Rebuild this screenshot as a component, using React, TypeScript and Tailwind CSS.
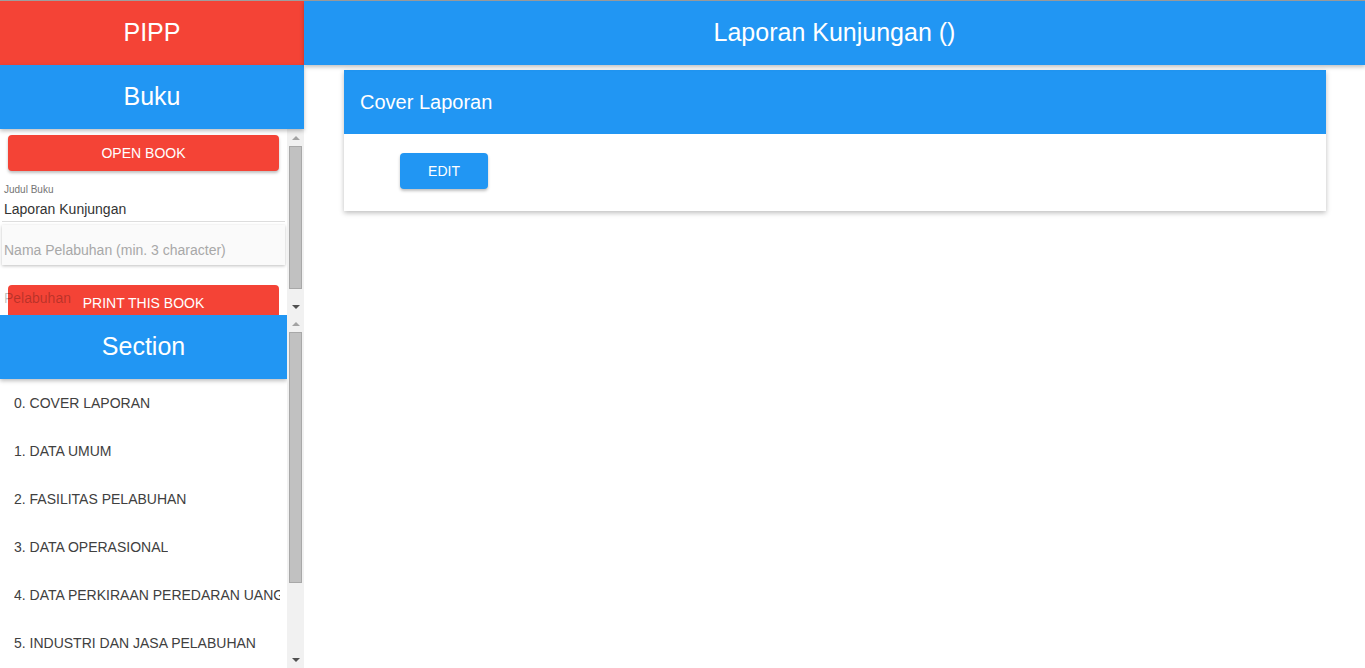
import React from "react"

type ScrollbarProps = { height: number; thumbTop: number; thumbHeight: number }

// classic windows-style scrollbar, drawn by hand so every browser shows the same thing
function Scrollbar({ height, thumbTop, thumbHeight }: ScrollbarProps) {
  return (
    <div className="w-[17px] shrink-0 bg-[#f1f1f1] flex flex-col" style={{ height }}>
      <div className="h-[17px] flex items-center justify-center">
        <div className="w-0 h-0 border-l-[4px] border-r-[4px] border-b-[4px] border-l-transparent border-r-transparent border-b-[#a3a3a3]" />
      </div>
      <div className="flex-1 relative">
        <div
          className="absolute left-[2px] w-[13px] bg-[#c1c1c1] border border-[#a8a8a8]"
          style={{ top: thumbTop, height: thumbHeight }}
        />
      </div>
      <div className="h-[17px] flex items-center justify-center">
        <div className="w-0 h-0 border-l-[4px] border-r-[4px] border-t-[4px] border-l-transparent border-r-transparent border-t-[#505050]" />
      </div>
    </div>
  )
}

const sections = [
  "0. COVER LAPORAN",
  "1. DATA UMUM",
  "2. FASILITAS PELABUHAN",
  "3. DATA OPERASIONAL",
  "4. DATA PERKIRAAN PEREDARAN UANG",
  "5. INDUSTRI DAN JASA PELABUHAN",
]

export default function App() {
  return (
    <div className="w-[1365px] h-[668px] overflow-hidden flex flex-col bg-white font-['Liberation_Sans',Arial,sans-serif]">
      <div className="h-px bg-[#9e9e9e] shrink-0" />
      <div className="flex flex-1 min-h-0">
        {/* sidebar */}
        <aside className="w-[304px] shrink-0 flex flex-col">
          <div className="h-16 shrink-0 bg-[#f44336] flex items-center justify-center text-white text-[25px]">PIPP</div>
          <div className="h-16 shrink-0 bg-[#2196f3] flex items-center justify-center text-white text-[25px] shadow-[0_2px_4px_rgba(0,0,0,0.25)] relative z-10">
            Buku
          </div>

          <div className="h-[186px] shrink-0 flex">
            <div className="flex-1 overflow-hidden pt-[6px] relative">
              <button className="mx-2 w-[271px] h-9 rounded bg-[#f44336] text-white text-sm shadow-[0_2px_3px_rgba(0,0,0,0.25)]">
                OPEN BOOK
              </button>
              <div className="mx-0.5 mt-[13px] border-b border-[#dddddd] pb-[2px]">
                <div className="px-0.5 text-[10px] text-[#757575] leading-3">Judul Buku</div>
                <div className="px-0.5 mt-[3px] text-sm text-[#333333] leading-5">Laporan Kunjungan</div>
              </div>
              <div className="mx-0.5 mt-[3px] h-10 bg-[#fafafa] shadow-[0_1px_3px_rgba(0,0,0,0.25)] flex items-center pt-[10px] px-0.5 text-sm text-[#a8a8a8]">
                Nama Pelabuhan (min. 3 character)
              </div>
              <div className="relative mt-[20px]">
                <button className="mx-2 w-[271px] h-9 rounded bg-[#f44336] text-white text-sm">
                  PRINT THIS BOOK
                </button>
                <span className="absolute left-1 top-[3px] text-sm text-black/25">Pelabuhan</span>
              </div>
            </div>
            <Scrollbar height={186} thumbTop={0} thumbHeight={143} />
          </div>

          <div className="flex-1 min-h-0 flex">
            <div className="flex-1 overflow-hidden">
              <div className="h-16 bg-[#2196f3] flex items-center justify-center text-white text-[25px] shadow-[0_2px_4px_rgba(0,0,0,0.25)] relative z-10">
                Section
              </div>
              {sections.map((s) => (
                <div key={s} className="h-12 flex items-center pl-[14px] pr-[7px] overflow-hidden whitespace-nowrap text-sm text-[#404040]">
                  <span className="overflow-hidden">{s}</span>
                </div>
              ))}
            </div>
            <Scrollbar height={353} thumbTop={0} thumbHeight={251} />
          </div>
        </aside>

        {/* content */}
        <main className="flex-1 flex flex-col">
          <div className="h-16 shrink-0 bg-[#2196f3] flex items-center justify-center text-white text-[25px] shadow-[0_2px_4px_rgba(0,0,0,0.25)] relative z-10">
            Laporan Kunjungan ()
          </div>
          <div className="mt-[5px] ml-10 mr-[39px] bg-white shadow-[0_2px_5px_rgba(0,0,0,0.26)]">
            <div className="h-16 bg-[#2196f3] flex items-center px-4 text-white text-xl">Cover Laporan</div>
            <div className="pl-14 pt-[19px] pb-[22px]">
              <button className="w-[88px] h-9 rounded bg-[#2196f3] text-white text-sm shadow-[0_2px_3px_rgba(0,0,0,0.25)]">
                EDIT
              </button>
            </div>
          </div>
        </main>
      </div>
    </div>
  )
}
